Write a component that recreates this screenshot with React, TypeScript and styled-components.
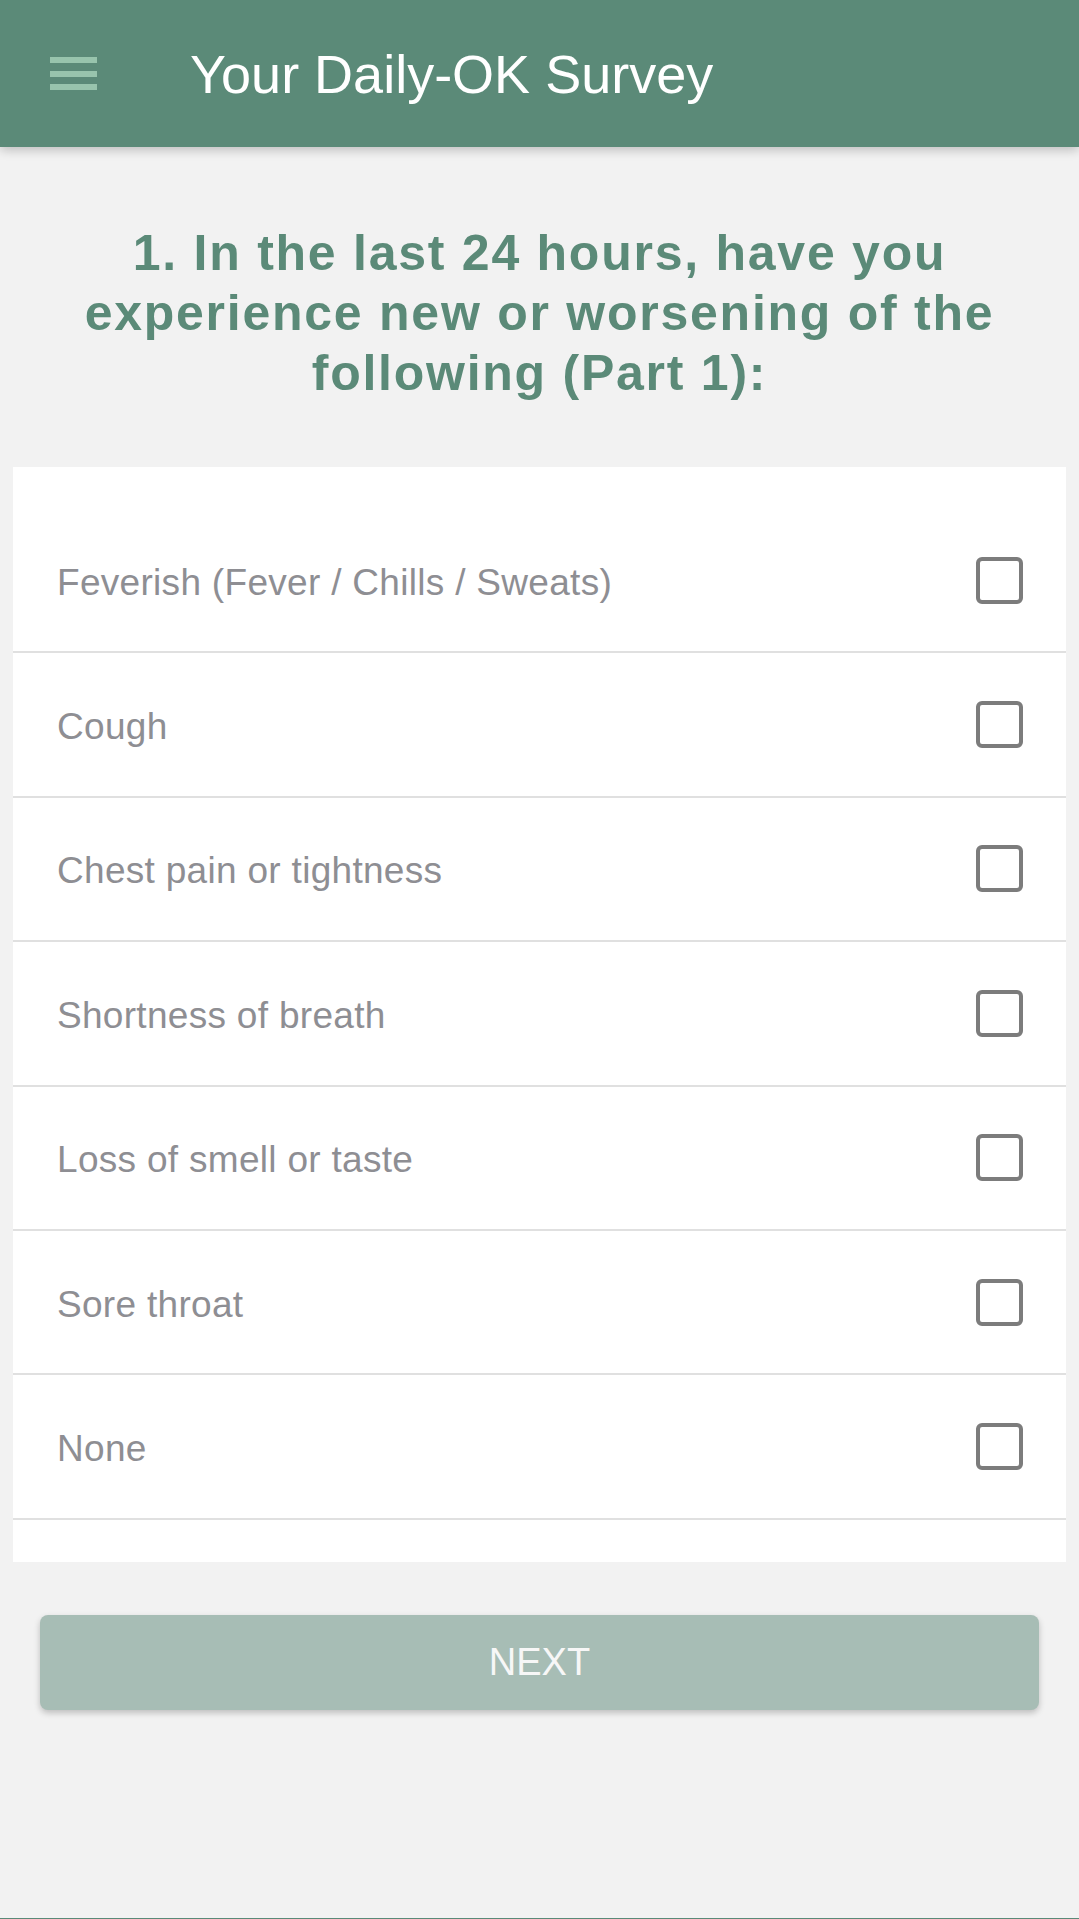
import React, { useState } from "react";
import styled, { createGlobalStyle } from "styled-components";

const GlobalStyle = createGlobalStyle`
  html, body {
    margin: 0;
    padding: 0;
    background: #f2f2f2;
    font-family: "Liberation Sans", Arial, sans-serif;
  }
  * { box-sizing: border-box; }
`;

const Page = styled.div`
  min-height: 100vh;
  display: flex;
  flex-direction: column;
  background: #f2f2f2;
  border-bottom: 1px solid #5b8a78;
`;

const Header = styled.header`
  height: 147px;
  background: #5b8a78;
  display: flex;
  align-items: center;
  padding-left: 50px;
  gap: 93px;
  box-shadow: 0 3px 10px rgba(0, 0, 0, 0.22);
  position: relative;
  z-index: 1;
`;

const MenuButton = styled.button`
  width: 47px;
  height: 33px;
  padding: 0;
  border: none;
  background: transparent;
  display: flex;
  flex-direction: column;
  justify-content: space-between;
  cursor: pointer;
`;

const MenuBar = styled.span`
  display: block;
  height: 6px;
  width: 100%;
  background: #98c4ad;
`;

const HeaderTitle = styled.h1`
  margin: 0;
  color: #ffffff;
  font-size: 54px;
  font-weight: 400;
  line-height: 1;
`;

const Main = styled.main`
  display: flex;
  flex-direction: column;
  padding-top: 76px;
`;

const Question = styled.h2`
  margin: 0;
  padding: 0 60px;
  text-align: center;
  color: #5b8a78;
  font-size: 50px;
  font-weight: 700;
  line-height: 60px;
  letter-spacing: 1.75px;
`;

const Card = styled.ul`
  list-style: none;
  margin: 64px 13px 0;
  padding: 42px 0 42px;
  background: #ffffff;
`;

const Row = styled.li`
  height: 144.4px;
  border-bottom: 2px solid #e0e0e0;
  display: flex;
  align-items: center;
  justify-content: space-between;
  padding: 0 43px 0 44px;
`;

const RowLabel = styled.label`
  padding-top: 5px;
  color: #8e8e93;
  font-size: 37px;
  letter-spacing: 0.3px;
  cursor: pointer;
`;

const Check = styled.input`
  appearance: none;
  -webkit-appearance: none;
  margin: 0;
  width: 47px;
  height: 47px;
  border: 4px solid #7c7c7c;
  border-radius: 6px;
  background: #ffffff;
  cursor: pointer;

  &:checked {
    background: #5b8a78;
    border-color: #5b8a78;
  }
`;

const NextButton = styled.button`
  margin: 53px 40px 0;
  height: 95px;
  border: none;
  border-radius: 8px;
  background: #a7bdb5;
  color: #f7f7f7;
  font-family: "Liberation Sans", Arial, sans-serif;
  font-size: 38px;
  letter-spacing: 0;
  box-shadow: 0 3px 6px rgba(0, 0, 0, 0.22);
  cursor: pointer;
`;

const symptoms = [
  "Feverish (Fever / Chills / Sweats)",
  "Cough",
  "Chest pain or tightness",
  "Shortness of breath",
  "Loss of smell or taste",
  "Sore throat",
  "None",
];

export default function App() {
  const [checked, setChecked] = useState<Record<number, boolean>>({});
  return (
    <Page>
      <GlobalStyle />
      <Header>
        <MenuButton aria-label="menu">
          <MenuBar />
          <MenuBar />
          <MenuBar />
        </MenuButton>
        <HeaderTitle>Your Daily-OK Survey</HeaderTitle>
      </Header>
      <Main>
        <Question>
          1. In the last 24 hours, have you experience new or worsening of the following (Part 1):
        </Question>
        <Card>
          {symptoms.map((s, i) => (
            <Row key={s}>
              <RowLabel htmlFor={`sym-${i}`}>{s}</RowLabel>
              <Check
                id={`sym-${i}`}
                type="checkbox"
                checked={!!checked[i]}
                onChange={() => setChecked({ ...checked, [i]: !checked[i] })}
              />
            </Row>
          ))}
        </Card>
        <NextButton>NEXT</NextButton>
      </Main>
    </Page>
  );
}
